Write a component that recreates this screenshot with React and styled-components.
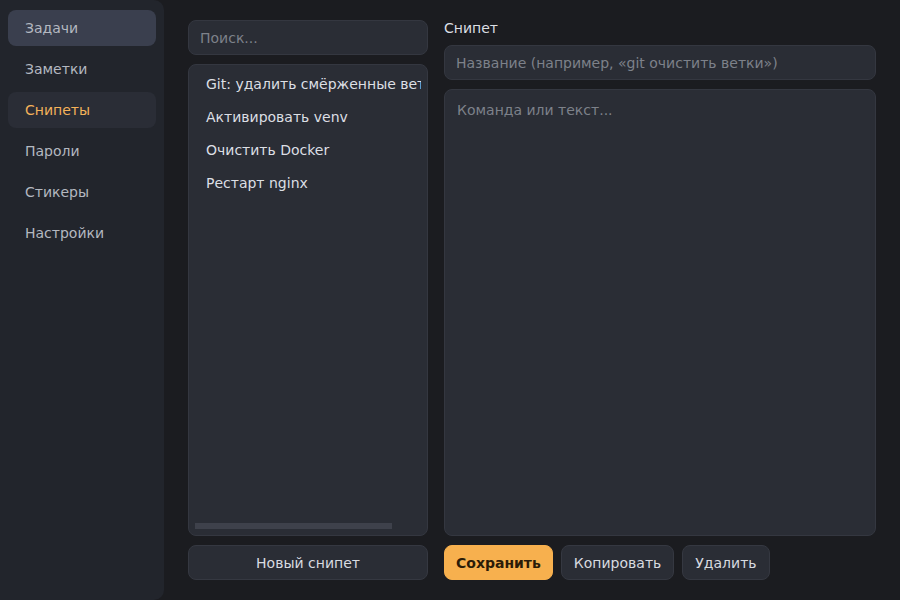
import React from "react";
import styled, { createGlobalStyle } from "styled-components";

const Global = createGlobalStyle`
  html, body {
    margin: 0;
    padding: 0;
    background: #1b1c20;
    font-family: "DejaVu Sans", "Liberation Sans", sans-serif;
  }
  * { box-sizing: border-box; }
`;

const Layout = styled.div`
  width: 900px;
  height: 600px;
  display: flex;
  background: #1b1c20;
`;

const Sidebar = styled.nav`
  width: 164px;
  flex-shrink: 0;
  background: #22252c;
  border-radius: 0 10px 10px 0;
  padding: 10px 8px;
  display: flex;
  flex-direction: column;
  gap: 5px;
`;

const NavItem = styled.div`
  height: 36px;
  display: flex;
  align-items: center;
  padding: 0 17px;
  border-radius: 8px;
  font-size: 14px;
  color: ${(p) => (p.$current ? "#f4b25a" : "#b4b8c0")};
  background: ${(p) =>
    p.$active ? "#3a3f4e" : p.$current ? "#2a2d36" : "transparent"};
`;

const Main = styled.main`
  flex: 1;
  display: flex;
  gap: 16px;
  padding: 20px 24px 20px 24px;
`;

const ListColumn = styled.section`
  width: 240px;
  display: flex;
  flex-direction: column;
  gap: 9px;
`;

const EditorColumn = styled.section`
  flex: 1;
  display: flex;
  flex-direction: column;
  gap: 9px;
`;

const Field = styled.div`
  height: 35px;
  flex-shrink: 0;
  display: flex;
  align-items: center;
  padding: 0 11px;
  background: #2a2d35;
  border: 1px solid #343740;
  border-radius: 8px;
  font-size: 14px;
  color: #7d818a;
`;

const List = styled.div`
  flex: 1;
  min-height: 0;
  background: #2a2d35;
  border: 1px solid #343740;
  border-radius: 8px;
  padding: 3px 6px 6px;
  display: flex;
  flex-direction: column;
`;

const Scroller = styled.div`
  flex: 1;
  overflow: hidden;
  display: flex;
  flex-direction: column;
`;

const ListItem = styled.div`
  padding: 8px 11px;
  font-size: 14px;
  line-height: 17px;
  color: #dcdfe4;
  white-space: nowrap;
`;

const ScrollThumb = styled.div`
  height: 6px;
  width: 197px;
  flex-shrink: 0;
  background: #3e414b;
`;

const Label = styled.div`
  font-size: 14px;
  line-height: 16px;
  color: #dcdfe4;
`;

const TextArea = styled.div`
  flex: 1;
  background: #2a2d35;
  border: 1px solid #343740;
  border-radius: 8px;
  padding: 12px 12px;
  font-size: 14px;
  line-height: 17px;
  color: #7d818a;
`;

const Actions = styled.div`
  display: flex;
  gap: 8px;
`;

const Button = styled.button`
  height: 35px;
  flex-shrink: 0;
  padding: 0 ${(p) => (p.$primary ? 11 : 12)}px;
  border-radius: 8px;
  font-family: inherit;
  font-size: 14px;
  font-weight: ${(p) => (p.$primary ? 700 : 400)};
  color: ${(p) => (p.$primary ? "#2b1c08" : "#d8dbe0")};
  background: ${(p) => (p.$primary ? "#f7b04e" : "#2a2d35")};
  border: 1px solid ${(p) => (p.$primary ? "#f7b04e" : "#353841")};
  width: ${(p) => (p.$wide ? "100%" : "auto")};
`;

const nav = ["Задачи", "Заметки", "Снипеты", "Пароли", "Стикеры", "Настройки"];
const snippets = [
  "Git: удалить смёрженные ветки",
  "Активировать venv",
  "Очистить Docker",
  "Рестарт nginx",
];

export default function App() {
  return (
    <Layout>
      <Global />
      <Sidebar>
        {nav.map((n, i) => (
          <NavItem key={n} $active={i === 0} $current={i === 2}>
            {n}
          </NavItem>
        ))}
      </Sidebar>
      <Main>
        <ListColumn>
          <Field>Поиск...</Field>
          <List>
            <Scroller>
              {snippets.map((s) => (
                <ListItem key={s}>{s}</ListItem>
              ))}
            </Scroller>
            <ScrollThumb />
          </List>
          <Button $wide>Новый снипет</Button>
        </ListColumn>
        <EditorColumn>
          <Label>Снипет</Label>
          <Field>Название (например, «git очистить ветки»)</Field>
          <TextArea>Команда или текст...</TextArea>
          <Actions>
            <Button $primary>Сохранить</Button>
            <Button>Копировать</Button>
            <Button>Удалить</Button>
          </Actions>
        </EditorColumn>
      </Main>
    </Layout>
  );
}
